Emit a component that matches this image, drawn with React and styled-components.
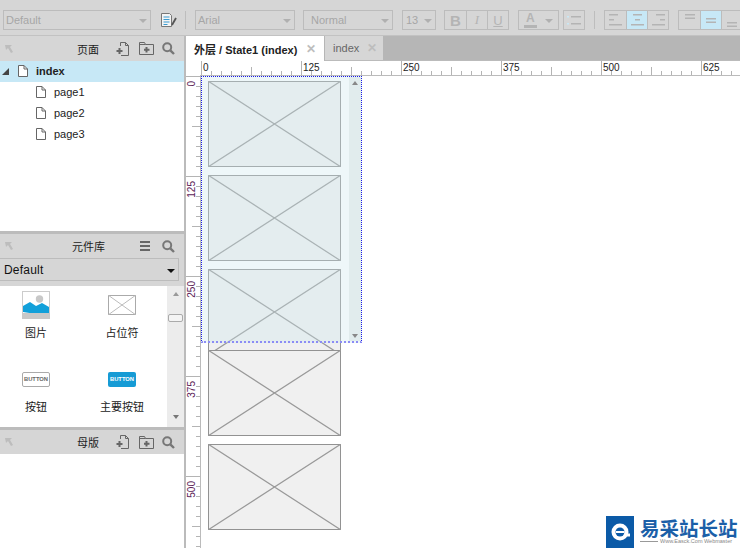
import React from "react";
import styled, { createGlobalStyle } from "styled-components";

const Global = createGlobalStyle`
  html, body { margin: 0; padding: 0; background: #fff; overflow: hidden; }
  body { font-family: "Liberation Sans", "Noto Sans CJK SC", sans-serif; }
  * { box-sizing: border-box; }
`;

const Page = styled.div`
  position: relative; width: 740px; height: 548px; overflow: hidden;
  display: flex; flex-direction: column; background: #fff; color: #222; font-size: 11px;
`;

/* ---------- toolbar ---------- */
const Toolbar = styled.div`
  flex: 0 0 36px; display: flex; align-items: center; padding: 5px 0 0 3px;
  background: #d6d6d6; border-bottom: 1px solid #c2c2c2; overflow: hidden;
`;
const Select = styled.div`
  flex: 0 0 ${p => p.$w}px; height: 20px; margin-left: ${p => p.$ml || 0}px;
  border: 1px solid #bcbcbc; display: flex; align-items: center; justify-content: space-between;
  padding: 0 3px 0 2px; color: #a6a6a6; font-size: 11px;
`;
const Caret = styled.i`
  width: 0; height: 0; border-left: 4px solid transparent; border-right: 4px solid transparent;
  border-top: 4px solid #b0b0b0; margin-top: 2px;
`;
const Sep = styled.div`
  flex: 0 0 1px; height: 18px; background: #bdbdbd; margin-left: ${p => p.$ml}px;
`;
const BtnGroup = styled.div`
  flex: 0 0 auto; display: flex; height: 20px; margin-left: ${p => p.$ml}px; border: 1px solid #bcbcbc;
`;
const Btn = styled.div`
  width: ${p => p.$w || 21}px; height: 18px; display: flex; align-items: center; justify-content: center;
  background: ${p => p.$on ? "#c7e8f6" : "transparent"}; color: #b4b4b4;
  font-size: ${p => p.$b ? 15 : 13}px; font-weight: ${p => p.$b ? 700 : 400}; font-style: ${p => p.$i ? "italic" : "normal"};
  font-family: ${p => p.$i ? '"Liberation Serif", serif' : "inherit"};
  text-decoration: ${p => p.$u ? "underline" : "none"};
  & + & { border-left: 1px solid #bcbcbc; }
`;
const ColorBtn = styled(Select)`
  padding: 0 5px 0 5px; font-size: 12px; font-weight: 700; color: #b4b4b4;
`;
const ColorA = styled.span`
  display: block; line-height: 12px; border-bottom: 3px solid #b4b4b4; padding: 0 2px; height: 16px;
`;

/* ---------- main ---------- */
const Main = styled.div`flex: 1; display: flex; min-height: 0;`;
const Sidebar = styled.aside`
  flex: 0 0 186px; min-width: 0; display: flex; flex-direction: column;
  border-right: 2px solid #bbb;
`;
const Panel = styled.section`
  flex: ${p => p.$grow ? "1" : `0 0 ${p.$h}px`}; display: flex; flex-direction: column;
  border-top: ${p => p.$first ? "0" : "3px solid #bcbcbc"}; min-height: 0;
`;
const PanelHeader = styled.header`
  flex: 0 0 ${p => p.$h || 24}px; display: flex; align-items: center; background: #d6d6d6;
  padding: 0 9px 0 4px;
`;
const PanelTitle = styled.span`
  margin-left: auto; font-size: 11px; color: #222; margin-right: ${p => p.$mr}px;
`;
const HeadIcon = styled.svg`
  flex: 0 0 auto; display: block; margin-left: ${p => p.$ml || 0}px;
`;
const Tree = styled.div`flex: 1; display: flex; flex-direction: column;`;
const TreeRow = styled.div`
  height: 21px; display: flex; align-items: center; padding-bottom: 2px;
  padding-left: ${p => p.$sel ? 2 : 36}px; background: ${p => p.$sel ? "#c7e8f6" : "transparent"};
  font-weight: ${p => p.$sel ? 700 : 400}; font-size: 11px; color: #222;
`;
const Expander = styled.i`
  width: 0; height: 0; border-left: 7px solid transparent; border-bottom: 7px solid #444;
  margin-right: 9px; margin-top: 2px;
`;
const RowLabel = styled.span`margin-left: 8px;`;

const LibSelectWrap = styled.div`
  flex: 0 0 28px; background: #d6d6d6; padding-right: 5px;
`;
const LibSelect = styled.div`
  height: 23px; border: 1px solid #bcbcbc; border-left: 0; display: flex; align-items: center;
  justify-content: space-between; padding: 0 3px 0 4px; font-size: 12px; color: #111; letter-spacing: .2px;
`;
const LibCaret = styled.i`
  width: 0; height: 0; border-left: 4px solid transparent; border-right: 4px solid transparent;
  border-top: 4px solid #111; margin-top: 2px;
`;
const LibBody = styled.div`flex: 1; display: flex; min-height: 0;`;
const LibGrid = styled.div`
  flex: 1; display: grid; grid-template-columns: 72px 100px; grid-auto-rows: 74px; padding-top: 1px;
  min-width: 0;
`;
const LibItem = styled.div`
  display: flex; flex-direction: column; align-items: center; font-size: 11px; color: #222;
`;
const LibIcon = styled.div`
  height: 36px; display: flex; align-items: center; justify-content: center; flex: 0 0 36px;
`;
const LibLabel = styled.span`line-height: 14px; margin-top: 3px;`;
const Scrollbar = styled.div`
  flex: 0 0 17px; background: #ececec; position: relative; display: flex; flex-direction: column;
  align-items: center; justify-content: space-between; padding: 6px 0 8px;
`;
const ScrollUp = styled.i`
  width: 0; height: 0; border-left: 3.5px solid transparent; border-right: 3.5px solid transparent;
  border-bottom: 4px solid ${p => p.$c || "#999"};
`;
const ScrollDown = styled(ScrollUp)`
  border-bottom: 0; border-top: 4px solid ${p => p.$c || "#777"};
`;
const Thumb = styled.div`
  position: absolute; left: 1px; top: 28px; width: 15px; height: 8px; background: #f4f4f4;
  border: 1px solid #aaa; border-radius: 2px;
`;

/* ---------- workspace ---------- */
const Workspace = styled.div`flex: 1; display: flex; flex-direction: column; min-width: 0;`;
const TabBar = styled.div`
  flex: 0 0 25px; min-height: 0; display: flex; background: #b6b6b6; border-bottom: 1px solid #bbb;
`;
const Tab = styled.div`
  flex: 0 0 ${p => p.$w}px; display: flex; align-items: center; padding-left: ${p => p.$pl}px;
  background: ${p => p.$active ? "#fff" : "#d6d6d6"}; color: ${p => p.$active ? "#222" : "#666"};
  font-weight: ${p => p.$active ? 700 : 400}; font-size: 11px; height: ${p => p.$active ? 25 : 24}px;
  border-right: ${p => p.$active ? "1px solid #b6b6b6" : "0"};
`;
const TabClose = styled.span`
  margin-left: ${p => p.$ml}px; color: #bdbdbd; font-size: 12px; font-weight: 700; line-height: 1;
`;
const Canvas = styled.div`position: relative; flex: 1; background: #fff; overflow: hidden;`;
const RulerDrawing = styled.svg`position: absolute; left: 0; top: 0; display: block;`;
const HLabel = styled.span`
  position: absolute; top: 1px; font-size: 10px; line-height: 11px; color: #222;
`;
const VLabel = styled.span`
  position: absolute; left: 0; font-size: 10px; line-height: 11px; color: #5c2358;
  writing-mode: vertical-rl; transform: rotate(180deg);
`;
const Wire = styled.svg`position: absolute; left: 22px; display: block;`;
const Selection = styled.div`
  position: absolute; left: 15px; top: 15px; width: 161px; height: 267px;
  background: rgba(203, 230, 236, .33); border: 1px dotted #1a1ae6;
  border-bottom: 2px dotted #8c8cf5;
`;
const SelScroll = styled.div`
  position: absolute; right: 0; top: 0; bottom: 0; width: 12px; background: rgba(175, 195, 190, .2);
  display: flex; flex-direction: column; align-items: center; justify-content: space-between; padding: 4px 0 3px;
`;

/* ---------- watermark ---------- */
const Logo = styled.div`
  position: absolute; right: 0; bottom: 0; width: 135px; height: 33px; background: #fff;
  display: flex; align-items: flex-end; padding-left: 1px;
`;
const LogoMark = styled.svg`flex: 0 0 auto; display: block;`;
const LogoText = styled.div`
  margin-left: 6px; height: 29px; display: flex; flex-direction: column; color: #1b5fa8; white-space: nowrap;
`;
const LogoCn = styled.span`
  font-size: 19.5px; line-height: 18px; height: 18px; font-weight: 700;
  font-family: "Noto Sans CJK SC", sans-serif;
`;
const LogoEnRow = styled.div`display: flex; align-items: center; height: 7px; margin-top: 1px;`;
const LogoRule = styled.i`flex: 0 0 18px; height: 1px; background: #999; margin-right: 2px;`;
const LogoEn = styled.span`font-size: 5.5px; line-height: 7px; color: #888;`;

/* ---------- drawings ---------- */
const Corner = () => (
  <HeadIcon width="10" height="10" viewBox="0 0 10 10">
    <path d="M1 1h7L6 3l3 5-2 1-3-5-2 2z" fill="#bdbdbd" />
  </HeadIcon>
);
const NewPage = ({ ml }) => (
  <HeadIcon $ml={ml} width="14" height="14" viewBox="0 0 14 14" fill="none" stroke="#666">
    <path d="M4.500 4V.5h5l3 3v10H5" />
    <path d="M9.500.5v3h3" />
    <path d="M3.500 6v6M.5 9h6" strokeWidth="2" />
  </HeadIcon>
);
const NewFolder = ({ ml }) => (
  <HeadIcon $ml={ml} width="15" height="13" viewBox="0 0 15 13" fill="none" stroke="#666">
    <path d="M.5 12.500v-12h5l1 2h8v10z" />
    <path d="M.5 2.500h6" />
    <path d="M7.500 5v5.500M5 7.750h5.500" strokeWidth="2" />
  </HeadIcon>
);
const Search = ({ ml }) => (
  <HeadIcon $ml={ml} width="13" height="13" viewBox="0 0 13 13" fill="none" stroke="#777">
    <circle cx="5.200" cy="5.200" r="4" strokeWidth="2" />
    <path d="M8.300 8.300l3.700 3.700" strokeWidth="2.400" />
  </HeadIcon>
);
const MenuIcon = ({ ml }) => (
  <HeadIcon $ml={ml} width="10" height="10" viewBox="0 0 10 10" fill="#666">
    <path d="M0 0h10v2H0zM0 4h10v2H0zM0 8h10v2H0z" />
  </HeadIcon>
);
const FileIcon = () => (
  <svg width="10" height="12" viewBox="0 0 10 12" fill="#fff" stroke="#666" style={{ display: "block", flex: "none" }}>
    <path d="M.5.500h5.500l3.500 3.500v7.500h-9z" />
    <path d="M6 .5v3.500h3.500" fill="none" />
  </svg>
);
const Placeholder = ({ w, h, top, fill = "#f0f0f0" }) => (
  <Wire width={w} height={h} style={{ top }} viewBox={`0 0 ${w} ${h}`}>
    <rect x=".5" y=".5" width={w - 1} height={h - 1} fill={fill} stroke="#929292" />
    <path d={`M0 0L${w} ${h}M${w} 0L0 ${h}`} stroke="#999" strokeWidth="1.200" fill="none" />
  </Wire>
);
const ImageIcon = () => (
  <svg width="28" height="28" viewBox="0 0 28 28" style={{ display: "block" }}>
    <rect x=".5" y=".5" width="27" height="27" fill="#fff" stroke="#ccc" />
    <circle cx="17.500" cy="8" r="3.700" fill="#c8c8c8" />
    <path d="M1 21v-6l7-4 6 4 6-3 7 4v9z" fill="#12a0da" />
    <rect y="22" width="28" height="6" fill="#c8c8c8" />
  </svg>
);
const PlaceholderIcon = () => (
  <svg width="28" height="20" viewBox="0 0 28 20" style={{ display: "block" }}>
    <rect x=".5" y=".5" width="27" height="19" fill="#fff" stroke="#aaa" />
    <path d="M0 0l28 20M28 0L0 20" stroke="#bbb" fill="none" />
  </svg>
);
const ButtonChip = styled.div`
  width: 28px; height: 15px; border-radius: 2px;
  border: ${p => p.$primary ? "0" : "1px solid #aaa"}; background: ${p => p.$primary ? "#169bd5" : "#fff"};
  color: ${p => p.$primary ? "#fff" : "#666"}; font-size: 5.800px; font-weight: 700;
  display: flex; align-items: center; justify-content: center;
`;

const W = 554, H = 487;
const RulerTicks = () => {
  const d = [];
  for (let i = 0; i * 10 + 15.5 < W; i++) {
    const x = i * 10 + 15.5, len = i % 10 === 0 ? 14 : i % 5 === 0 ? 8 : 4;
    d.push(`M${x} 14V${14 - len}`);
  }
  for (let i = 0; i * 10 + 15.5 < H; i++) {
    const y = i * 10 + 15.5, len = i % 10 === 0 ? 14 : i % 5 === 0 ? 8 : 4;
    d.push(`M14 ${y}H${14 - len}`);
  }
  return (
    <RulerDrawing width={W} height={H}>
      <path d={d.join("")} stroke="#b4b4b4" fill="none" />
      <path d={`M15 14.500H${W}M14.500 14V${H}`} stroke="#bbb" fill="none" />
    </RulerDrawing>
  );
};

const marks = [0, 125, 250, 375, 500, 625];

export default function App() {
  return (
    <Page>
      <Global />
      <Toolbar>
        <Select $w={148}>Default<Caret /></Select>
        <svg width="16" height="14" viewBox="0 0 16 14" style={{ marginLeft: 10, flex: "none" }} fill="none">
          <path d="M.5.500h8l2 2v11H.5z" fill="#f4f4f4" stroke="#777" />
          <path d="M2.500 4h6M2.500 6.500h6M2.500 9h6M2.500 11.500h4" stroke="#3a9bd0" />
          <path d="M15 5l-4 7" stroke="#555" strokeWidth="1.800" />
        </svg>
        <Sep $ml={8} />
        <Select $w={100} $ml={9}>Arial<Caret /></Select>
        <Select $w={90} $ml={8}><span style={{ paddingLeft: 5 }}>Normal</span><Caret /></Select>
        <Select $w={34} $ml={9}><span style={{ paddingLeft: 1 }}>13</span><Caret /></Select>
        <BtnGroup $ml={8}>
          <Btn $b>B</Btn><Btn $i>I</Btn><Btn $u>U</Btn>
        </BtnGroup>
        <ColorBtn $w={41} $ml={9}><ColorA>A</ColorA><Caret /></ColorBtn>
        <BtnGroup $ml={4}>
          <Btn $w={20}>
            <svg width="14" height="11" viewBox="0 0 14 11" fill="#b4b4b4"><path d="M4 1h10v1.500H4zM4 8h10v1.500H4z" /><path d="M0 1h2v1.500H0zM0 8h2v1.500H0z" fill="#c7e8f6" /></svg>
          </Btn>
        </BtnGroup>
        <Sep $ml={9} />
        <BtnGroup $ml={9}>
          <Btn><AlignLines a="l" /></Btn><Btn $on><AlignLines a="c" /></Btn><Btn><AlignLines a="r" /></Btn>
        </BtnGroup>
        <BtnGroup $ml={9}>
          <Btn><VLines y={2} /></Btn><Btn $on><VLines y={6} /></Btn><Btn><VLines y={10} /></Btn>
        </BtnGroup>
      </Toolbar>

      <Main>
        <Sidebar>
          <Panel $first $h={195}>
            <PanelHeader $h={25}>
              <Corner />
              <PanelTitle $mr={17}>页面</PanelTitle>
              <NewPage />
              <NewFolder ml={9} />
              <Search ml={8} />
            </PanelHeader>
            <Tree>
              <TreeRow $sel><Expander /><FileIcon /><RowLabel>index</RowLabel></TreeRow>
              <TreeRow><FileIcon /><RowLabel>page1</RowLabel></TreeRow>
              <TreeRow><FileIcon /><RowLabel>page2</RowLabel></TreeRow>
              <TreeRow><FileIcon /><RowLabel>page3</RowLabel></TreeRow>
            </Tree>
          </Panel>
          <Panel $h={196}>
            <PanelHeader>
              <Corner />
              <PanelTitle $mr={35}>元件库</PanelTitle>
              <MenuIcon />
              <Search ml={12} />
            </PanelHeader>
            <LibSelectWrap>
              <LibSelect>Default<LibCaret /></LibSelect>
            </LibSelectWrap>
            <LibBody>
              <LibGrid>
                <LibItem><LibIcon><ImageIcon /></LibIcon><LibLabel>图片</LibLabel></LibItem>
                <LibItem><LibIcon><PlaceholderIcon /></LibIcon><LibLabel>占位符</LibLabel></LibItem>
                <LibItem><LibIcon><ButtonChip>BUTTON</ButtonChip></LibIcon><LibLabel>按钮</LibLabel></LibItem>
                <LibItem><LibIcon><ButtonChip $primary>BUTTON</ButtonChip></LibIcon><LibLabel>主要按钮</LibLabel></LibItem>
              </LibGrid>
              <Scrollbar>
                <ScrollUp />
                <Thumb />
                <ScrollDown />
              </Scrollbar>
            </LibBody>
          </Panel>
          <Panel $grow>
            <PanelHeader>
              <Corner />
              <PanelTitle $mr={17}>母版</PanelTitle>
              <NewPage />
              <NewFolder ml={9} />
              <Search ml={8} />
            </PanelHeader>
          </Panel>
        </Sidebar>

        <Workspace>
          <TabBar>
            <Tab $active $w={139} $pl={8}>外层 / State1 (index)<TabClose $ml={9}>✕</TabClose></Tab>
            <Tab $w={58} $pl={8}>index<TabClose $ml={8}>✕</TabClose></Tab>
          </TabBar>
          <Canvas>
            <RulerTicks />
            {marks.map((m, i) => (
              <HLabel key={m} style={{ left: 17 + i * 100 }}>{m}</HLabel>
            ))}
            {marks.slice(0, 5).map((m, i) => (
              <VLabel key={m} style={{ top: 20 + i * 100 }}>{m}</VLabel>
            ))}
            <Placeholder w={133} h={86} top={20} />
            <Placeholder w={133} h={86} top={114} />
            <Placeholder w={133} h={86} top={208} />
            <Placeholder w={133} h={86} top={289} />
            <Placeholder w={133} h={86} top={383} />
            <Selection>
              <SelScroll>
                <ScrollUp $c="#888" />
                <ScrollDown $c="#888" />
              </SelScroll>
            </Selection>
          </Canvas>
        </Workspace>
      </Main>

      <Logo>
        <LogoMark width="28" height="32" viewBox="0 0 28 32">
          <rect width="28" height="32" fill="#0b5aa7" />
          <circle cx="14" cy="16" r="8.500" fill="#fff" />
          <circle cx="14" cy="16" r="4.500" fill="#0b5aa7" />
          <path d="M10 15h8.500v2H10z" fill="#fff" />
          <path d="M18 17.500h6v3h-6z" fill="#fff" />
        </LogoMark>
        <LogoText>
          <LogoCn>易采站长站</LogoCn>
          <LogoEnRow><LogoRule /><LogoEn>Www.Easck.Com Webmaster</LogoEn></LogoEnRow>
        </LogoText>
      </Logo>
    </Page>
  );
}

function AlignLines({ a }) {
  const x = (w) => (a === "l" ? 0 : a === "c" ? (13 - w) / 2 : 13 - w);
  return (
    <svg width="13" height="12" viewBox="0 0 13 12" fill="#b4b4b4">
      <rect x={x(9)} y="0" width="9" height="1.500" />
      <rect x={x(5)} y="5" width="5" height="1.500" />
      <rect x={x(13)} y="10" width="13" height="1.500" />
    </svg>
  );
}
function VLines({ y }) {
  return (
    <svg width="12" height="14" viewBox="0 0 12 14" fill="#b4b4b4">
      <rect x="1" y={y - 1} width="10" height="1.500" />
      <rect x="1" y={y + 2.500} width="10" height="1.500" />
    </svg>
  );
}
